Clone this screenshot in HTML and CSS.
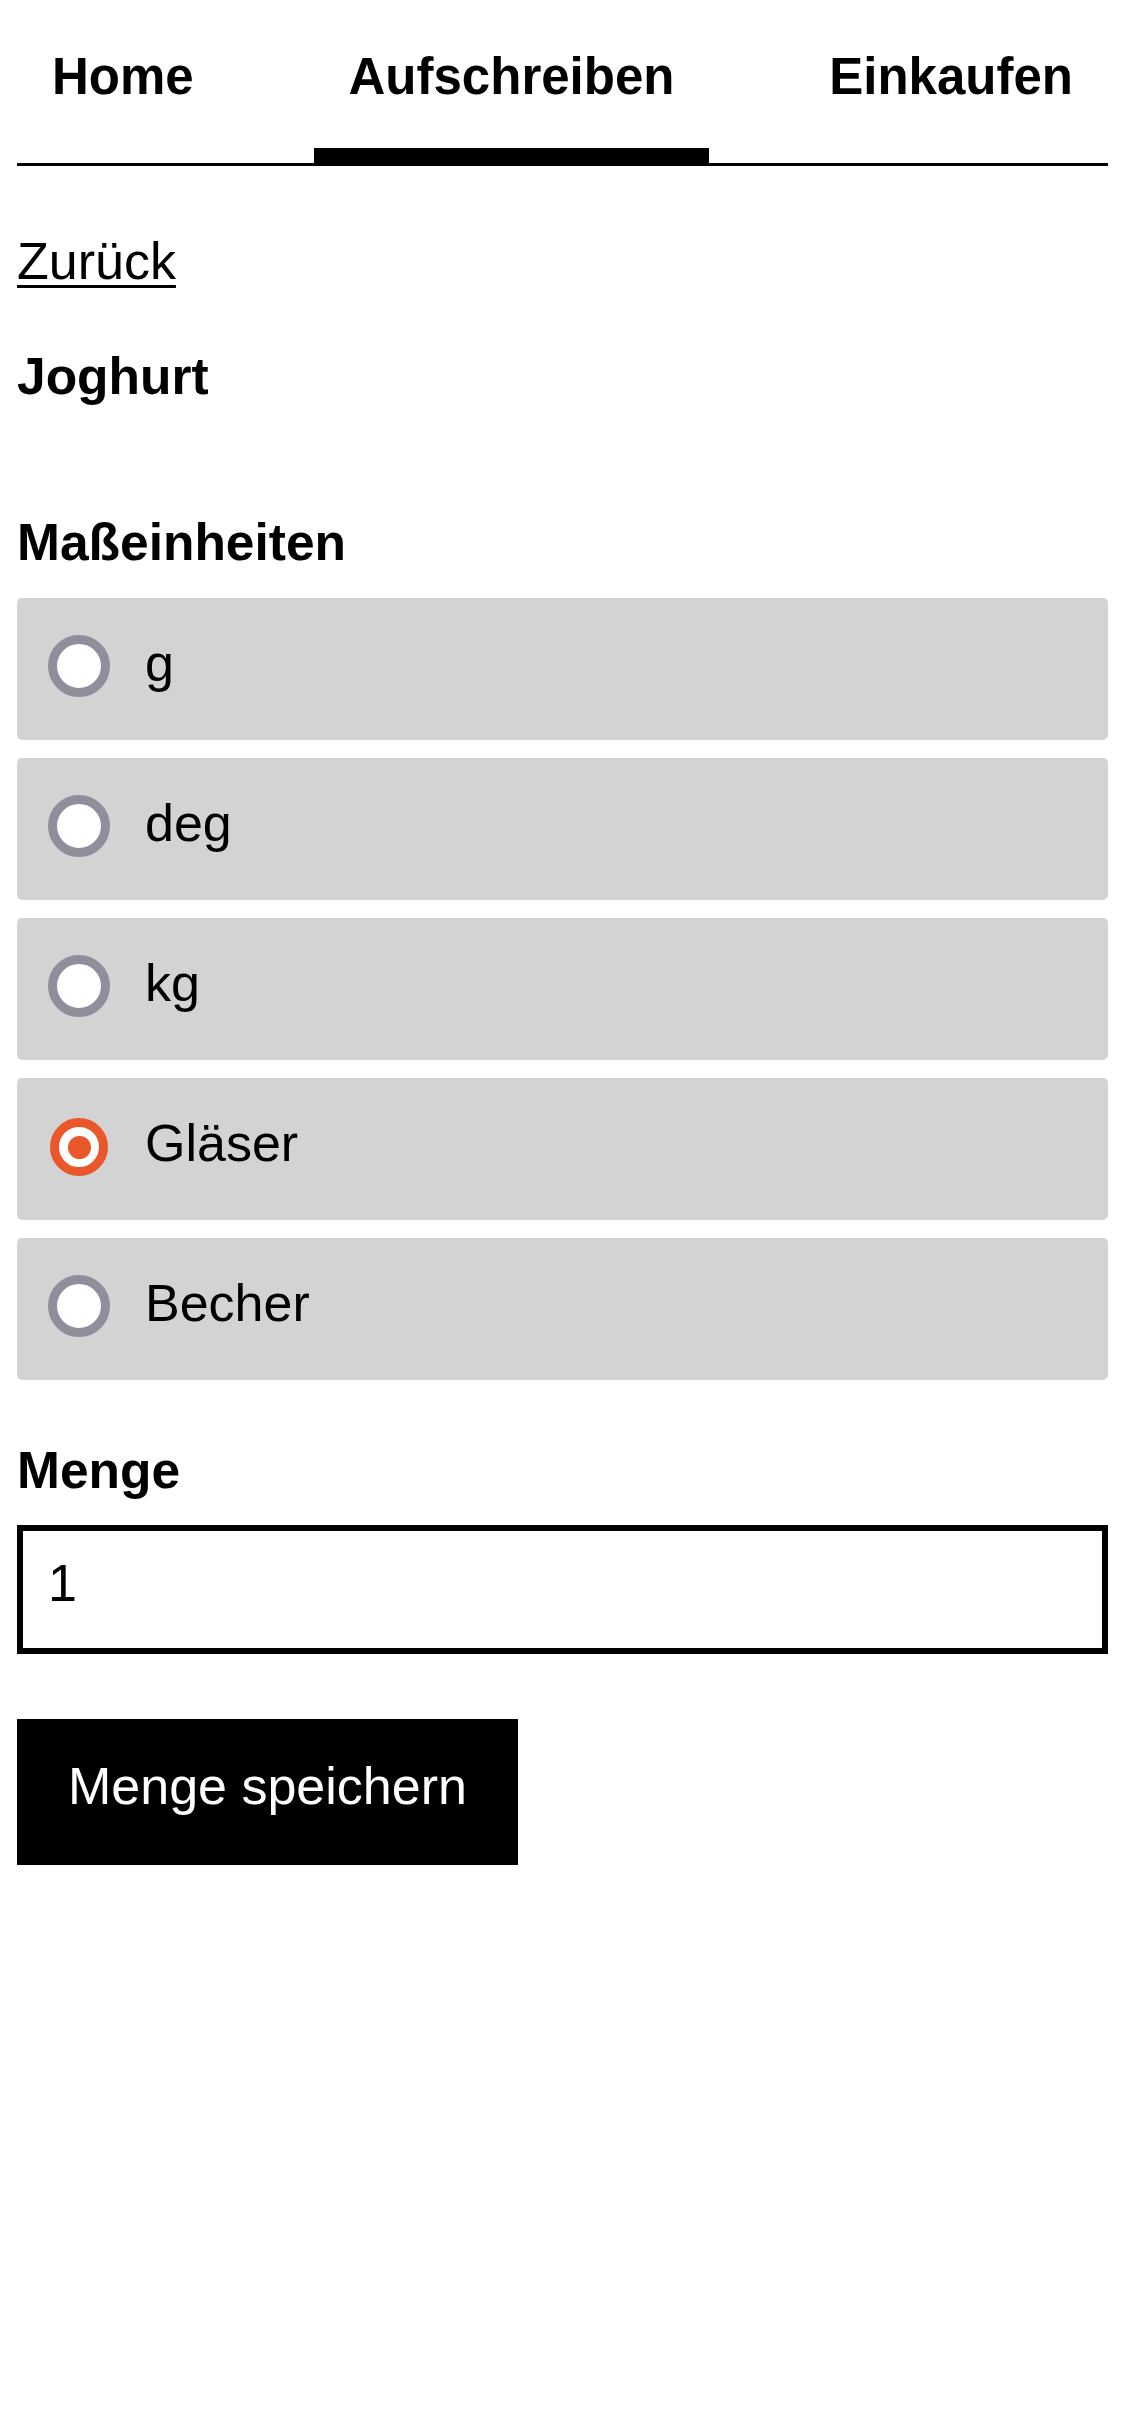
FILE: index.html
```html
<!DOCTYPE html>
<html lang="de">
<head>
<meta charset="utf-8">
<title>Joghurt</title>
<link rel="stylesheet" href="styles.css">
</head>
<body>
<div class="page">
  <nav class="tabs">
    <a class="tab" href="#">Home</a>
    <a class="tab active" href="#">Aufschreiben</a>
    <a class="tab" href="#">Einkaufen</a>
  </nav>

  <div class="back"><a href="#" class="back-link">Zurück</a></div>
  <h2 class="title">Joghurt</h2>

  <h3 class="section">Maßeinheiten</h3>
  <div class="options">
    <label class="option"><span class="radio"></span><span class="label">g</span></label>
    <label class="option"><span class="radio"></span><span class="label">deg</span></label>
    <label class="option"><span class="radio"></span><span class="label">kg</span></label>
    <label class="option"><span class="radio checked"></span><span class="label">Gläser</span></label>
    <label class="option"><span class="radio"></span><span class="label">Becher</span></label>
  </div>

  <h3 class="section menge">Menge</h3>
  <div class="input">1</div>

  <button class="save" type="button">Menge speichern</button>
</div>
</body>
</html>
```

FILE: styles.css
```css
* { box-sizing: border-box; }

html, body {
  margin: 0;
  padding: 0;
  background: #fff;
}

body {
  font-family: "Liberation Sans", Arial, Helvetica, sans-serif;
  font-size: 52px;
  line-height: 58px;
  color: #000;
}

.page {
  padding: 0 17px;
}

.tabs {
  display: flex;
  justify-content: space-between;
  border-bottom: 3px solid #000;
}

.tab {
  display: block;
  padding: 48px 35px 42px;
  font-size: 51px;
  font-weight: bold;
  color: #000;
  text-decoration: none;
  border-bottom: 15px solid transparent;
  line-height: 58px;
}

.tab.active {
  border-bottom-color: #000;
}

.back {
  margin-top: 66px;
}

.back-link {
  color: #000;
  text-decoration: underline;
  text-decoration-thickness: 3px;
  text-underline-offset: 6px;
}

.title {
  margin: 57px 0 0;
  font-size: 51.5px;
  font-weight: bold;
  line-height: 58px;
}

.section {
  margin: 108px 0 0;
  font-size: 51.5px;
  font-weight: bold;
  line-height: 58px;
}

.options {
  display: flex;
  flex-direction: column;
  gap: 18px;
  margin-top: 27px;
}

.option {
  display: flex;
  align-items: flex-start;
  gap: 35px;
  height: 142px;
  padding: 36px 31px 0;
  background: #d3d3d3;
  border-radius: 5px;
}

.radio {
  flex: 0 0 auto;
  width: 62px;
  height: 62px;
  margin-top: 1px;
  border: 9px solid #8f8e9b;
  border-radius: 50%;
  background: #fff;
}

.radio.checked {
  width: 58px;
  height: 58px;
  margin: 4px 2px 0;
  border-color: #e9572a;
  display: flex;
  align-items: center;
  justify-content: center;
}

.radio.checked::after {
  content: "";
  width: 23px;
  height: 23px;
  border-radius: 50%;
  background: #e9572a;
}

.label {
  line-height: 58px;
}

.section.menge {
  margin-top: 61px;
}

.input {
  margin-top: 26px;
  height: 129px;
  border: 6px solid #000;
  padding: 23px 25px 0;
  background: #fff;
}

.save {
  display: block;
  margin-top: 65px;
  height: 146px;
  padding: 38px 51px 50px;
  border: 0;
  border-radius: 0;
  background: #000;
  color: #fff;
  font-family: inherit;
  font-size: 52px;
  line-height: 58px;
  text-align: left;
}
```
